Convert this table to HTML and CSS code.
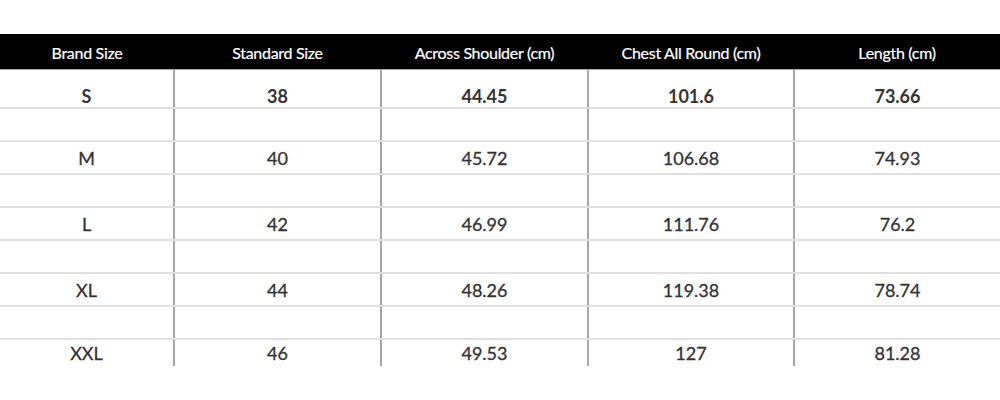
FILE: index.html
```html
<!DOCTYPE html>
<html lang="en">
<head>
<meta charset="utf-8">
<title>Size Chart</title>
<link rel="stylesheet" href="styles.css">
</head>
<body>
<div class="chart">
  <table class="size-table">
    <colgroup>
      <col class="c1"><col class="c2"><col class="c3"><col class="c4"><col class="c5">
    </colgroup>
    <thead>
      <tr class="head-row">
        <th>Brand Size</th>
        <th>Standard Size</th>
        <th>Across Shoulder (cm)</th>
        <th>Chest All Round (cm)</th>
        <th>Length (cm)</th>
      </tr>
    </thead>
    <tbody>
      <tr class="row first"><td>S</td><td>38</td><td>44.45</td><td>101.6</td><td>73.66</td></tr>
      <tr class="row blank"><td></td><td></td><td></td><td></td><td></td></tr>
      <tr class="row"><td>M</td><td>40</td><td>45.72</td><td>106.68</td><td>74.93</td></tr>
      <tr class="row blank"><td></td><td></td><td></td><td></td><td></td></tr>
      <tr class="row"><td>L</td><td>42</td><td>46.99</td><td>111.76</td><td>76.2</td></tr>
      <tr class="row blank"><td></td><td></td><td></td><td></td><td></td></tr>
      <tr class="row"><td>XL</td><td>44</td><td>48.26</td><td>119.38</td><td>78.74</td></tr>
      <tr class="row blank"><td></td><td></td><td></td><td></td><td></td></tr>
      <tr class="row last"><td>XXL</td><td>46</td><td>49.53</td><td>127</td><td>81.28</td></tr>
    </tbody>
  </table>
</div>
</body>
</html>
```

FILE: styles.css
```css
html, body {
  margin: 0;
  padding: 0;
  background: #ffffff;
}

body {
  font-family: Lato, "Open Sans", "Liberation Sans", sans-serif;
  color: #333333;
}

.chart {
  padding-top: 34px;
  width: 1000px;
  height: 366px;
  overflow: hidden;
}

.size-table {
  width: 1000px;
  table-layout: fixed;
  border-collapse: collapse;
  border-spacing: 0;
}

.c1 { width: 174px; }
.c2 { width: 207px; }
.c3 { width: 207px; }
.c4 { width: 206px; }
.c5 { width: 206px; }

.head-row th {
  background: #000000;
  color: #ffffff;
  font-weight: 400;
  font-size: 16px;
  letter-spacing: -0.3px;
  -webkit-text-stroke: 0.2px #ffffff;
  height: 35px;
  padding: 4px 0 0 0;
  line-height: 20px;
  text-align: center;
  vertical-align: middle;
  border: none;
  border-bottom: 1px solid #a8a8a8;
  box-sizing: border-box;
}

.row td {
  font-size: 18px;
  line-height: 20px;
  -webkit-text-stroke: 0.3px #333333;
  text-align: center;
  vertical-align: middle;
  padding: 0;
  height: 31px;
  border-bottom: 2px solid #e0e0e0;
  border-left: 2px solid #a6a6a6;
}

.row td:first-child {
  border-left: none;
}

.row.first td {
  font-weight: 700;
  -webkit-text-stroke: 0;
  height: 39px;
  padding-top: 15px;
  box-sizing: border-box;
}

.row.last td {
  height: 27px;
  border-bottom: none;
  padding-top: 0;
  box-sizing: border-box;
}
```
